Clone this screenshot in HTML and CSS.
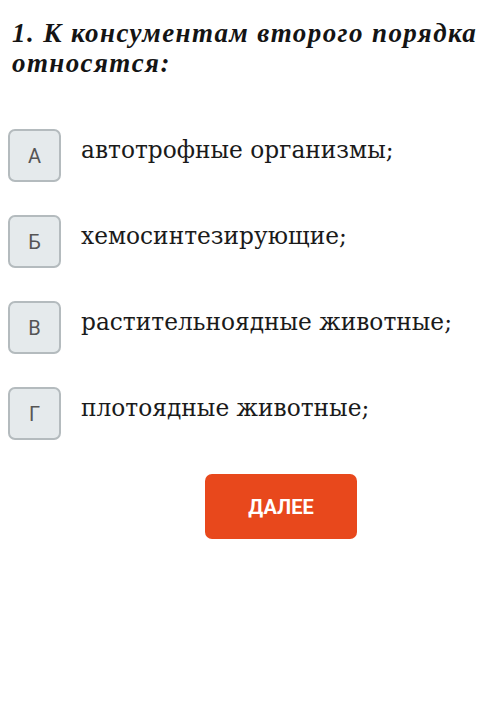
FILE: index.html
```html
<!DOCTYPE html>
<html lang="ru">
<head>
  <meta charset="UTF-8">
  <meta name="viewport" content="width=device-width, initial-scale=1.0">
  <title>Тест</title>
  <link rel="stylesheet" href="styles.css">
</head>
<body>
  <div class="quiz">
    <h2 class="question">1. К консументам второго порядка относятся:</h2>

    <div class="answers">
      <div class="answer">
        <span class="letter">А</span>
        <span class="answer-text">автотрофные организмы;</span>
      </div>
      <div class="answer">
        <span class="letter">Б</span>
        <span class="answer-text">хемосинтезирующие;</span>
      </div>
      <div class="answer">
        <span class="letter">В</span>
        <span class="answer-text">растительноядные животные;</span>
      </div>
      <div class="answer">
        <span class="letter">Г</span>
        <span class="answer-text">плотоядные животные;</span>
      </div>
    </div>

    <div class="actions">
      <button class="next-btn">ДАЛЕЕ</button>
    </div>
  </div>
</body>
</html>
```

FILE: styles.css
```css
body {
  margin: 0;
  background-color: #fff;
  color: #111;
}

.quiz {
  padding: 18px 8px 0 12px;
}

.question {
  margin: 0;
  font-family: "Liberation Serif", serif;
  font-style: italic;
  font-weight: bold;
  font-size: 27px;
  letter-spacing: 1.4px;
  line-height: 30px;
  color: #141414;
}

.answers {
  margin-top: 51px;
  margin-left: -4px;
  display: flex;
  flex-direction: column;
  gap: 33px;
}

.answer {
  display: flex;
  align-items: flex-start;
  gap: 20px;
}

.letter {
  flex: none;
  width: 49px;
  height: 49px;
  display: flex;
  align-items: center;
  justify-content: center;
  background-color: #e5eaec;
  border: 2px solid #b4bbbe;
  border-radius: 7px;
  font-family: Roboto, sans-serif;
  font-size: 20px;
  color: #555;
}

.answer-text {
  padding-top: 6px;
  font-family: "DejaVu Serif", serif;
  font-size: 23.3px;
  line-height: 30px;
  color: #1a1a1a;
}

.actions {
  margin-top: 34px;
  display: flex;
  justify-content: center;
  padding-left: 58px;
}

.next-btn {
  width: 152px;
  height: 65px;
  border: none;
  border-radius: 7px;
  background-color: #e8481c;
  color: #fff;
  font-family: Roboto, sans-serif;
  font-weight: bold;
  font-size: 20px;
}
```
